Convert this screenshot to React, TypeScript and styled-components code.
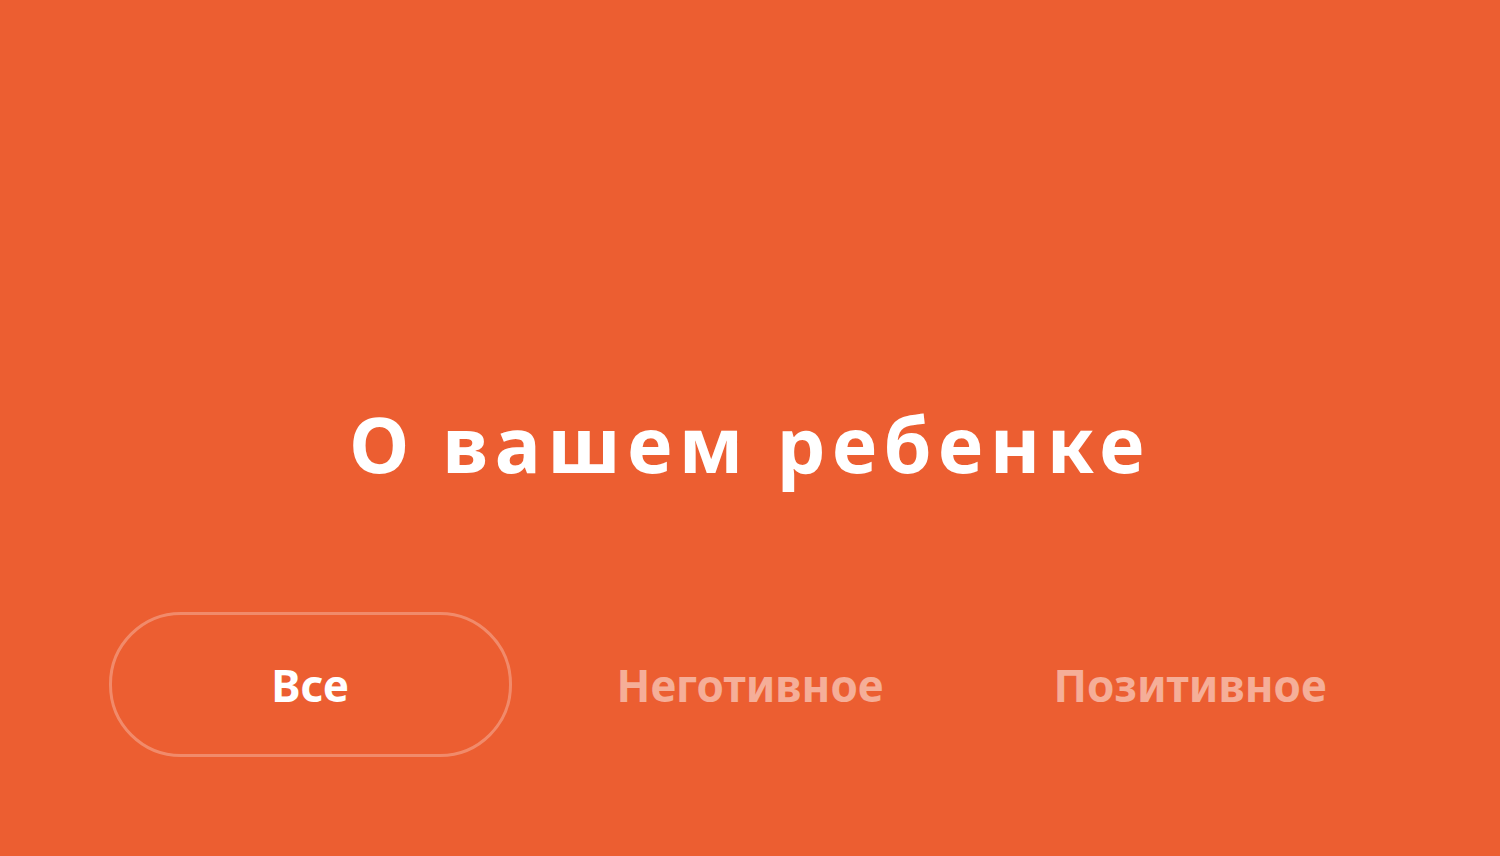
import React, { useState } from "react";
import styled, { createGlobalStyle } from "styled-components";

const Global = createGlobalStyle`
  html, body { margin: 0; padding: 0; background: #EC5E31; }
  body { font-family: "Noto Sans", "Open Sans", sans-serif; }
`;

const Page = styled.div`
  width: 1500px;
  height: 856px;
  background: #EC5E31;
  display: flex;
  flex-direction: column;
  align-items: center;
  box-sizing: border-box;
  padding-top: 389px;
`;

const Title = styled.h1`
  margin: 0;
  color: #fff;
  font-family: "Noto Sans", sans-serif;
  font-weight: 700;
  font-size: 77px;
  line-height: 110px;
  letter-spacing: 6.6px;
`;

const Tabs = styled.div`
  margin-top: 113px;
  display: grid;
  grid-template-columns: repeat(3, 440px);
`;

const Tab = styled.button<{ $active?: boolean }>`
  justify-self: center;
  width: 403px;
  height: 145px;
  box-sizing: border-box;
  border-radius: 72px;
  background: transparent;
  border: 3px solid ${(p) => (p.$active ? "rgba(255,255,255,0.28)" : "transparent")};
  color: ${(p) => (p.$active ? "#fff" : "rgba(255,255,255,0.5)")};
  font-family: "Noto Sans", sans-serif;
  font-weight: 700;
  font-size: 44px;
  cursor: pointer;
  padding: 0;
`;

const items = ["Все", "Неготивное", "Позитивное"];

export default function App() {
  const [active, setActive] = useState(0);
  return (
    <Page>
      <Global />
      <Title>О вашем ребенке</Title>
      <Tabs>
        {items.map((t, i) => (
          <Tab key={t} $active={i === active} onClick={() => setActive(i)}>
            {t}
          </Tab>
        ))}
      </Tabs>
    </Page>
  );
}
